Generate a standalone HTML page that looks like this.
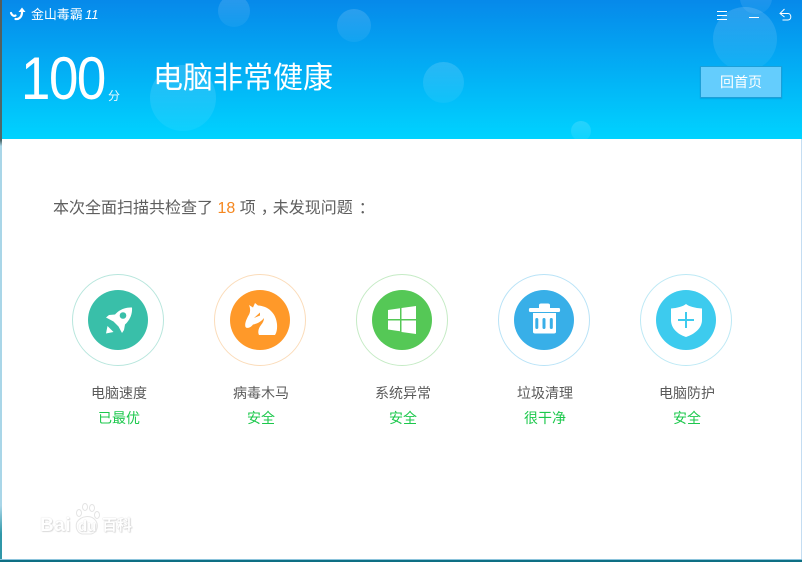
<!DOCTYPE html>
<html lang="zh">
<head>
<meta charset="utf-8">
<style>
html,body{margin:0;padding:0;width:802px;height:562px;overflow:hidden;background:#0f6f80}
*{box-sizing:border-box}
body{position:relative;font-family:"Liberation Sans","Noto Sans CJK SC",sans-serif}
.abs{position:absolute;white-space:nowrap}
#left{left:0;top:0;width:2px;height:562px;background:linear-gradient(#555c5a 0,#4d6a6c 25%,#a9d6e8 26%,#a9d6e8 90%,#2f97a8 95%)}
#right{left:800px;top:139px;width:2px;height:423px;background:linear-gradient(90deg,#fff 50%,#c4ddf2 50%)}
#bottom{left:0;top:559px;width:802px;height:3px;background:#0e6f84;border-top:1px solid #8cc4dc}
#win{left:2px;top:139px;width:798px;height:420px;background:#fff}
#head{left:2px;top:0;width:800px;height:139px;background:linear-gradient(#0689ea,#00d3ff);overflow:hidden}
.b{position:absolute;border-radius:50%;background:linear-gradient(rgba(255,255,255,.15),rgba(255,255,255,.05))}
.ring{position:absolute;top:274px;width:92px;height:92px;border-radius:50%;border:1px solid}
.disc{position:absolute;top:290px;width:60px;height:60px;border-radius:50%}
.l1,.l2{position:absolute;width:120px;text-align:center;font-size:14px;line-height:18px}
.l1{top:384px;color:#5a5a5a}
.l2{top:409px;color:#1cc84c}
svg{position:absolute}
</style>
</head>
<body>
<div class="abs" id="left"></div>
<div class="abs" id="right"></div>
<div class="abs" id="win"></div>
<div class="abs" id="bottom"></div>

<div class="abs" id="head">
  <div class="b" style="left:216px;top:-5px;width:32px;height:32px"></div>
  <div class="b" style="left:335px;top:9px;width:34px;height:33px"></div>
  <div class="b" style="left:148px;top:65px;width:66px;height:66px"></div>
  <div class="b" style="left:421px;top:62px;width:41px;height:41px"></div>
  <div class="b" style="left:569px;top:121px;width:20px;height:20px"></div>
  <div class="b" style="left:711px;top:7px;width:64px;height:64px"></div>
  <div class="b" style="left:738px;top:-18px;width:32px;height:32px"></div>
</div>

<svg style="left:9px;top:6px" width="18" height="17" viewBox="0 0 18 17">
  <path d="M2 7c1 2.500 3 3.500 4.500 2.500M6.500 13c3 .5 6-1.500 6.500-6V4" fill="none" stroke="#fff" stroke-width="2.200" stroke-linecap="round"/>
  <path d="M9.500 6l3.500-4.500L16.500 6z" fill="#fff"/>
</svg>
<div class="abs" style="left:31px;top:6px;font-size:13px;line-height:18px;color:#fff;letter-spacing:-.1px">金山毒霸</div>
<div class="abs" style="left:85px;top:6px;font-size:13px;line-height:18px;color:#fff;font-style:italic">11</div>

<div class="abs" style="left:21px;top:46px;font-size:60px;line-height:66px;color:#fff;transform-origin:0 0;transform:scaleX(.88);letter-spacing:-1.600px">100</div>
<div class="abs" style="left:108px;top:89px;font-size:12px;line-height:14px;color:#e8f8ff">分</div>
<div class="abs" style="left:153px;top:60px;font-size:30px;line-height:38px;color:#fff">电脑非常健康</div>

<svg style="left:716px;top:10px" width="12" height="12" viewBox="0 0 12 12"><path d="M1 1.500h10M1 5.500h10M1 9.500h10" stroke="#fff" stroke-width="1"/></svg>
<div class="abs" style="left:749px;top:17px;width:10px;height:1px;background:#fff"></div>
<svg style="left:779px;top:8px" width="14" height="14" viewBox="0 0 14 14"><path d="M5.500 1L1 5.500 5.500 9M1 5.500h8c3.500 0 4 6.500 0 6.500H3.500" fill="none" stroke="#fff" stroke-width="1"/></svg>

<div class="abs" style="left:700px;top:66px;width:82px;height:32px;background:#64cdfd;border:1px solid #1c9fd8;box-shadow:0 1px 1px rgba(0,90,160,.25);color:#fff;font-size:14px;line-height:30px;text-align:center">回首页</div>

<div class="abs" style="left:53px;top:199px;font-size:16px;line-height:20px;color:#5e5e5e;height:20px">本次全面扫描共检查了 <span style="color:#f5871f">18</span> 项<span style="position:relative;left:5px">，</span><span style="margin-left:1px">未发现问题</span><span style="position:relative;left:6px">：</span></div>

<div class="ring" style="left:72px;border-color:#b8e6dd"></div>
<div class="disc" style="left:88px;background:#39bfa9"></div>
<svg style="left:104px;top:306px" width="30" height="30" viewBox="0 0 30 30">
  <path d="M28 1.500C28.500 8 26 14 21 18.500L20 24l-2 3-3.500-6.500-5-5L2 11.500 5 9l6-.5C15 4 21 1 28 1.500z" fill="#fff"/>
  <circle cx="19" cy="9.500" r="3.300" fill="#39bfa9"/>
  <path d="M2 27.500L3.500 20l6 6z" fill="#fff"/>
</svg>

<div class="ring" style="left:214px;border-color:#fbdcba"></div>
<div class="disc" style="left:230px;background:#ff9929"></div>
<svg style="left:244px;top:302px" width="34" height="34" viewBox="0 0 34 34">
  <path d="M5 3L9 5.500 11 1l3 2.500C24 4 32 11 33 22c.3 4 0 8-2 11H15c-1.500-3-.5-7 2-10 2-2.500 3-4.500 3-7-2 3-7 6-11 6.500-2 3-6 4.500-7.500 2.500C.5 22 2 18 4.500 13.500 6 11 7 8 5 3z" fill="#fff"/>
  <path d="M10 16l6-5.500v3z" fill="#ff9929"/>
</svg>

<div class="ring" style="left:356px;border-color:#c5ebc5"></div>
<div class="disc" style="left:372px;background:#55c856"></div>
<svg style="left:387px;top:305px" width="30" height="30" viewBox="0 0 30 30">
  <path d="M1 5l12-1.700V14H1zM14.500 3L29 1v13H14.500zM1 15.500h12v10.700L1 24.500zM14.500 15.500H29V29l-14.500-2z" fill="#fff"/>
</svg>

<div class="ring" style="left:498px;border-color:#b9e3f7"></div>
<div class="disc" style="left:514px;background:#38afe8"></div>
<svg style="left:528px;top:303px" width="33" height="31" viewBox="0 0 33 31">
  <path d="M11 5V2c0-1 1-1.500 2-1.500h7c1 0 2 .5 2 1.500v3h9c1.500 0 1.500 4 0 4H2C.5 9 .5 5 2 5z" fill="#fff"/>
  <path d="M5 10h23v19c0 1-1 1.500-2 1.500H7c-1 0-2-.5-2-1.500z" fill="#fff"/>
  <rect x="7.300" y="15" width="3" height="11" rx="1.500" fill="#38afe8"/>
  <rect x="14.500" y="15" width="3" height="11" rx="1.500" fill="#38afe8"/>
  <rect x="21.800" y="15" width="3" height="11" rx="1.500" fill="#38afe8"/>
</svg>

<div class="ring" style="left:640px;border-color:#bde9f5"></div>
<div class="disc" style="left:656px;background:#3dcbee"></div>
<svg style="left:670px;top:303px" width="33" height="35" viewBox="0 0 33 35">
  <path d="M16 1c3 2.500 9 4 16 4.500V17c0 8-7 14-16 17C7 31 1 25 1 17V5.500C7 5 13 3.500 16 1z" fill="#fff"/>
  <path d="M16 9v16M8 17h16" stroke="#3dcbee" stroke-width="2"/>
</svg>

<div class="l1" style="left:59px">电脑速度</div>
<div class="l2" style="left:59px">已最优</div>
<div class="l1" style="left:201px">病毒木马</div>
<div class="l2" style="left:201px">安全</div>
<div class="l1" style="left:343px">系统异常</div>
<div class="l2" style="left:343px">安全</div>
<div class="l1" style="left:485px">垃圾清理</div>
<div class="l2" style="left:485px">很干净</div>
<div class="l1" style="left:627px">电脑防护</div>
<div class="l2" style="left:627px">安全</div>

<div class="abs" style="left:40px;top:516px;font-size:19px;line-height:20px;font-weight:bold;color:#fff;text-shadow:0 0 1px #ccc,1px 1px 1px #ddd;letter-spacing:.5px">Bai</div>
<div class="abs" style="left:78px;top:519px;font-size:15px;line-height:16px;font-weight:bold;color:#fff;text-shadow:0 0 1px #ccc,1px 1px 1px #ddd">du</div>
<div class="abs" style="left:102px;top:517px;font-size:15px;line-height:18px;font-weight:bold;color:#fff;text-shadow:0 0 1px #bbb,1px 1px 1px #ddd">百科</div>
<svg style="left:74px;top:502px" width="26" height="36" viewBox="0 0 26 36">
  <g fill="#fff" stroke="#e4e4e4" stroke-width="1">
    <ellipse cx="5" cy="11" rx="2.500" ry="3.500"/>
    <ellipse cx="11" cy="5" rx="2.500" ry="3.500"/>
    <ellipse cx="18" cy="6" rx="2.500" ry="3.500"/>
    <ellipse cx="23" cy="13" rx="2.500" ry="3.500"/>
  </g>
  <path d="M3 20c4-6 14-8 19-1 3 5 1 12-5 13H8c-5-1-7-7-5-12z" fill="none" stroke="#e4e4e4" stroke-width="1"/>
</svg>
</body>
</html>
